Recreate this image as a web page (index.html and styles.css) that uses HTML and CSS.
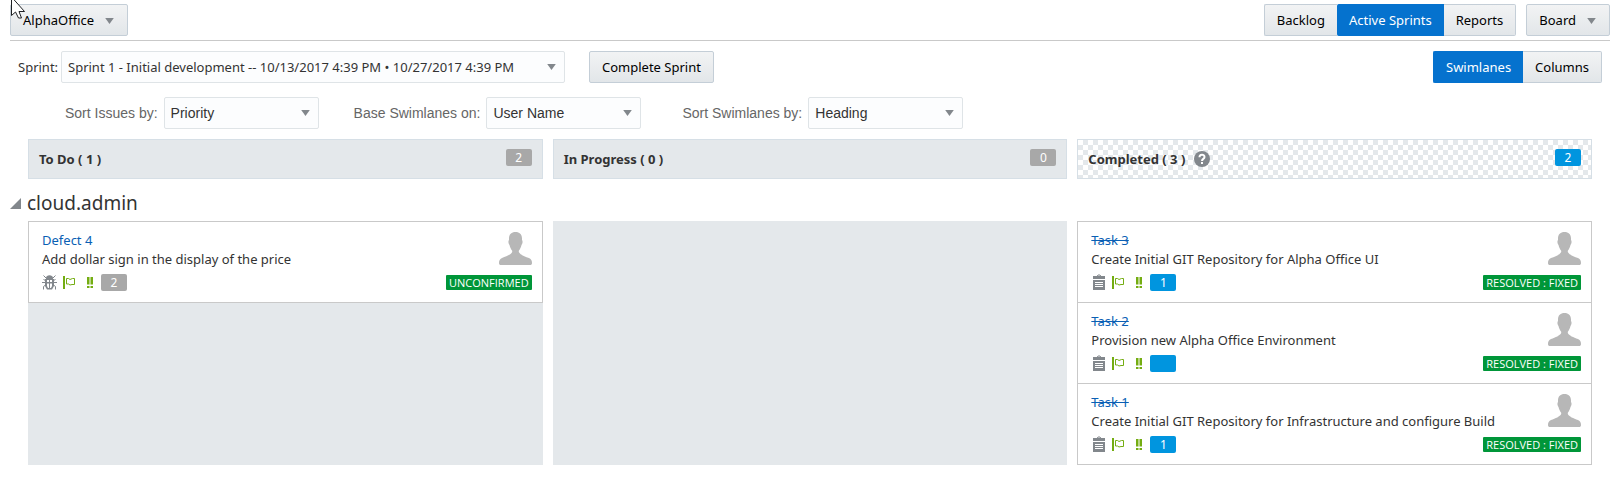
FILE: index.html
```html
<!DOCTYPE html>
<html lang="en">
<head>
<meta charset="utf-8">
<meta name="viewport" content="width=device-width, initial-scale=1">
<title>AlphaOffice - Active Sprints</title>
<link rel="stylesheet" href="styles.css">
</head>
<body>
<svg class="defs" width="0" height="0" aria-hidden="true">
  <symbol id="arrow" viewBox="0 0 10 7"><path d="M0 0H10L5 7Z" fill="#82878c"/></symbol>
  <symbol id="person" viewBox="0 0 33 33"><path d="M16.500 0C20.500 0 23 2.200 23 6.500V8C24 9 23.600 11.800 22.500 13C22 15.500 20.800 17.500 19.800 18.700V20C21 22.500 25.500 24.500 30 26C32.500 27 33 29 33 31C33 32.500 32.300 33 31 33H2C.7 33 0 32.500 0 31C0 29 .5 27 3 26C7.500 24.500 12 22.500 13.200 20V18.700C12.200 17.500 11 15.500 10.500 13C9.400 11.800 9 9 10 8V6.500C10 2.200 12.500 0 16.500 0Z" fill="#b7b7b7"/></symbol>
  <symbol id="bug" viewBox="0 0 15 17"><g fill="none" stroke="#82878c"><path d="M1.500 1.500L4 4M13.500 1.500L11 4M0 8.500H15M1.500 5.500L3.500 6.500M13.500 5.500L11.500 6.500M1.500 15.500V12.500L3.500 11M13.500 15.500V12.500L11.500 11"/></g><path d="M4 4C4 .2 11 .2 11 4V5H4Z" fill="#82878c"/><path d="M3 5H12V12L10 15.500H5L3 12Z" fill="#82878c"/><path d="M5 6H7V8H5ZM8 6H10V8H8ZM5 9.500H7V14H6L5 12ZM8 9.500H10V12L9 14H8Z" fill="#fff"/></symbol>
  <symbol id="task" viewBox="0 0 12 17"><path d="M4 2.500L5 1H7L8 2.500" fill="none" stroke="#82878c"/><path d="M0 2H12V5H0ZM0 6H12V16H0Z" fill="#82878c"/><path d="M2 8.500H10M2 10.500H10M2 12.500H10" stroke="#fff"/></symbol>
  <symbol id="flag" viewBox="0 0 12 14"><path d="M0 0H2V13H0Z" fill="#74ad12"/><path d="M3.500 2.500H5.500L7 3.500L9.500 2.500H11.500V8.500H9L7 9L5.500 8H3.500Z" fill="none" stroke="#74ad12"/></symbol>
  <symbol id="priority" viewBox="0 0 6 12"><path d="M0 0H2.500V7.500H0ZM3.500 0H6V7.500H3.500ZM0 9H2.500V11H0ZM3.500 9H6V11H3.500Z" fill="#74ad12"/></symbol>
</svg>

<svg class="pointer" width="16" height="22" viewBox="0 0 16 22" aria-hidden="true"><path d="M.5-2V15.500L4.500 12L7.500 18H10.500L8 11.500H13.500L1.500-2" fill="#fff" stroke="#1d1f23"/></svg>

<header class="topbar">
  <button class="btn" type="button">AlphaOffice <svg class="caret"><use href="#arrow"/></svg></button>
  <nav class="topnav" aria-label="Views">
    <div class="group">
      <button class="btn" type="button">Backlog</button><button class="btn btn-on" type="button" aria-pressed="true">Active Sprints</button><button class="btn" type="button">Reports</button>
    </div>
    <button class="btn" type="button">Board <svg class="caret"><use href="#arrow"/></svg></button>
  </nav>
</header>

<main>
  <div class="sprintbar">
    <label class="sprint-label" for="sprint">Sprint:</label>
    <span class="picker picker-wide"><select id="sprint"><option>Sprint 1 - Initial development -- 10/13/2017 4:39 PM • 10/27/2017 4:39 PM</option></select><svg class="caret"><use href="#arrow"/></svg></span>
    <button class="btn complete" type="button">Complete Sprint</button>
    <div class="group layout">
      <button class="btn btn-on" type="button" aria-pressed="true">Swimlanes</button><button class="btn" type="button">Columns</button>
    </div>
  </div>

  <div class="filters">
    <div class="filter"><label for="sort">Sort Issues by:</label><span class="picker"><select id="sort"><option>Priority</option></select><svg class="caret"><use href="#arrow"/></svg></span></div>
    <div class="filter"><label for="base">Base Swimlanes on:</label><span class="picker"><select id="base"><option>User Name</option></select><svg class="caret"><use href="#arrow"/></svg></span></div>
    <div class="filter"><label for="lanes">Sort Swimlanes by:</label><span class="picker"><select id="lanes"><option>Heading</option></select><svg class="caret"><use href="#arrow"/></svg></span></div>
  </div>

  <div class="columns">
    <h2 class="head">To Do ( 1 ) <span class="points">2</span></h2>
    <h2 class="head">In Progress ( 0 ) <span class="points">0</span></h2>
    <h2 class="head head-done">Completed ( 3 ) <svg class="help" viewBox="0 0 16 16" role="img" aria-label="Help"><circle cx="8" cy="8" r="8" fill="#82878c"/><path d="M5.500 6.200C5.500 3 10.500 3 10.500 6C10.500 8 8 7.800 8 10" fill="none" stroke="#fff" stroke-width="2"/><path d="M7 11H9V13H7Z" fill="#fff"/></svg> <span class="points points-blue">2</span></h2>
  </div>

  <h3 class="swimlane"><svg class="fold" viewBox="0 0 11 11"><path d="M11 0V11H0Z" fill="#82878c"/></svg>cloud.admin</h3>

  <div class="columns">
    <section class="lane">
      <article class="card">
        <div class="info"><a class="key" href="#d4">Defect 4</a><p class="title">Add dollar sign in the display of the price</p>
          <div class="meta"><svg class="bug"><use href="#bug"/></svg><svg class="flag"><use href="#flag"/></svg><svg class="prio"><use href="#priority"/></svg><span class="points">2</span></div></div>
        <div class="side"><svg class="person"><use href="#person"/></svg><span class="status">UNCONFIRMED</span></div>
      </article>
    </section>
    <section class="lane"></section>
    <section class="lane">
      <article class="card">
        <div class="info"><a class="key key-done" href="#t3">Task 3</a><p class="title">Create Initial GIT Repository for Alpha Office UI</p>
          <div class="meta"><svg class="task"><use href="#task"/></svg><svg class="flag"><use href="#flag"/></svg><svg class="prio"><use href="#priority"/></svg><span class="points points-blue">1</span></div></div>
        <div class="side"><svg class="person"><use href="#person"/></svg><span class="status">RESOLVED : FIXED</span></div>
      </article>
      <article class="card">
        <div class="info"><a class="key key-done" href="#t2">Task 2</a><p class="title">Provision new Alpha Office Environment</p>
          <div class="meta"><svg class="task"><use href="#task"/></svg><svg class="flag"><use href="#flag"/></svg><svg class="prio"><use href="#priority"/></svg><span class="points points-blue"></span></div></div>
        <div class="side"><svg class="person"><use href="#person"/></svg><span class="status">RESOLVED : FIXED</span></div>
      </article>
      <article class="card">
        <div class="info"><a class="key key-done" href="#t1">Task 1</a><p class="title">Create Initial GIT Repository for Infrastructure and configure Build</p>
          <div class="meta"><svg class="task"><use href="#task"/></svg><svg class="flag"><use href="#flag"/></svg><svg class="prio"><use href="#priority"/></svg><span class="points points-blue">1</span></div></div>
        <div class="side"><svg class="person"><use href="#person"/></svg><span class="status">RESOLVED : FIXED</span></div>
      </article>
    </section>
  </div>
</main>
</body>
</html>
```

FILE: styles.css
```css
* { box-sizing: border-box; }

body {
  margin: 0;
  padding: 4px 13px 16px 10px;
  background: #fff;
  color: #333;
  font: 13px/19px "Noto Sans", "Open Sans", sans-serif;
}

svg { flex: none; }
.defs { position: absolute; }
.pointer { position: absolute; top: 0; left: 11px; }

.topbar {
  display: flex;
  justify-content: space-between;
  padding-bottom: 4px;
  border-bottom: 1px solid #c9c9c9;
}
.topnav { display: flex; gap: 10px; }

.btn {
  display: flex;
  align-items: center;
  gap: 11px;
  height: 32px;
  padding: 1px 12px 0;
  border: 1px solid #c4ced7;
  border-radius: 2px;
  background: linear-gradient(#f2f3f4, #e2e6e9);
  color: #000;
  font: inherit;
  white-space: nowrap;
}
.caret { width: 9px; height: 6px; }
.topbar .caret { margin-right: 1px; }
.group { display: flex; }
.group .btn:not(:first-child) { border-left: 0; border-radius: 0 2px 2px 0; }
.group .btn:not(:last-child) { border-right: 0; border-radius: 2px 0 0 2px; }
.group .btn-on { background: #0572ce; border-color: #0572ce; color: #fff; }

.sprintbar {
  display: flex;
  align-items: center;
  padding: 10px 8px 0;
}
.sprint-label { width: 43px; white-space: nowrap; }
.picker { display: grid; align-items: center; width: 155px; }
.picker-wide { width: 504px; }
.picker > * { grid-area: 1 / 1; }
.picker .caret { justify-self: end; margin-right: 9px; pointer-events: none; }
.picker select {
  appearance: none;
  width: 100%;
  height: 32px;
  padding: 0 24px 0 6px;
  border: 1px solid #dfe4e7;
  border-radius: 2px;
  background: #fcfdfe;
  color: #333;
  font: 14px "Liberation Sans", Arial, sans-serif;
}
.picker-wide select { font: 13px "Noto Sans", "Open Sans", sans-serif; }
.complete { margin-left: 24px; }
.layout { margin-left: auto; }

.filters { display: flex; gap: 35px; padding: 14px 0 10px 55px; }
.filter {
  display: flex;
  align-items: center;
  gap: 6px;
  color: #666;
  font: 14px "Liberation Sans", Arial, sans-serif;
  white-space: nowrap;
}
.filter:last-child { margin-left: 6px; }

.columns {
  display: grid;
  grid-template-columns: repeat(3, minmax(0, 1fr));
  gap: 10px;
  padding: 0 18px;
}
.head {
  display: flex;
  align-items: center;
  gap: 9px;
  height: 40px;
  margin: 0;
  padding: 0 10px;
  border: 1px solid #d6dfe6;
  background: #e4e8eb;
  font-size: 13px;
  font-weight: 700;
}
.head-done { background: repeating-conic-gradient(#e4e8eb 0 25%, #fff 0 50%) 0 0 / 10px 10px; }
.head .points { margin-left: auto; margin-bottom: 4px; }
.help { width: 16px; height: 16px; }

.points {
  width: 26px;
  height: 17px;
  border-radius: 2px;
  background: #a8a8a8;
  color: #fff;
  font-size: 12px;
  font-weight: 400;
  line-height: 17px;
  text-align: center;
}
.points-blue { background: #0095df; }

.swimlane {
  display: flex;
  align-items: center;
  gap: 6px;
  height: 42px;
  margin: 0;
  padding-top: 7px;
  font-size: 19px;
  font-weight: 400;
}
.fold { width: 11px; height: 11px; }

.lane { background: #e4e8eb; }
.card {
  display: flex;
  justify-content: space-between;
  height: 82px;
  padding: 9px 10px 0 13px;
  border: 1px solid #c9c9c9;
  background: #fff;
}
.card + .card { margin-top: -1px; }
.info { flex: 1 0 0; min-width: 0; white-space: nowrap; }
.key { color: #0a5fb4; text-decoration: none; }
.key-done { text-decoration: line-through; }
.title { margin: 0; }
.meta { display: flex; align-items: center; height: 17px; margin-top: 5px; }
.bug { width: 15px; height: 17px; }
.task { width: 12px; height: 17px; margin: 0 1px 0 2px; }
.flag { width: 12px; height: 14px; margin-left: 6px; }
.prio { width: 6px; height: 12px; margin: 0 8px 0 12px; }
.side { display: flex; flex-direction: column; align-items: flex-end; padding-top: 1px; }
.person { width: 33px; height: 33px; }
.status {
  margin-top: 10px;
  padding: 0 3px;
  border-radius: 1px;
  background: #009639;
  color: #fff;
  font: 11px/15px "Open Sans", "Noto Sans", sans-serif;
  white-space: nowrap;
}
```
